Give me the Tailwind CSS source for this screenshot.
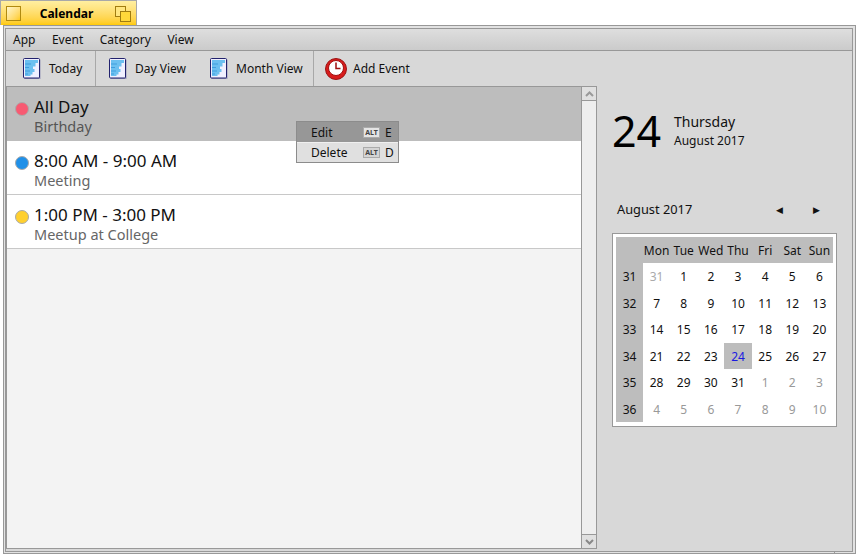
<!DOCTYPE html>
<html><head><meta charset="utf-8"><script src="https://cdn.jsdelivr.net/npm/@tailwindcss/browser@4"></script></head>
<body class="w-[857px] h-[555px] overflow-hidden bg-white font-['Noto_Sans',sans-serif] text-[12px] text-[#111] relative">
<!-- tab -->
<div class="w-[137px] h-[25px] border-t border-r border-l border-[#a8a8a8] bg-gradient-to-b from-[#ffefa0] to-[#ffcb00] flex items-center pl-[5px] pr-[5px] justify-between">
  <div class="w-[15px] h-[15px] border border-[#b08a10] bg-gradient-to-br from-[#fff6c8] to-[#ffcb00] mt-[1px]"></div>
  <span class="font-bold text-[12px] text-black leading-none -ml-[3px] mt-[2px]">Calendar</span>
  <svg width="16" height="16" viewBox="0 0 16 16" class="mt-[1px]"><rect x=".5" y=".5" width="10" height="10" fill="#ffe680" stroke="#a07c10"/><rect x="5.500" y="5.500" width="10" height="10" fill="#ffd83a" stroke="#a07c10"/></svg>
</div>
<!-- window -->
<div class="w-[853px] h-[529px] ml-[3px] border border-[#989898] bg-[#e2e2e2] pt-[2px] pl-[1px] pr-[2px] relative">
  <div class="h-[524px] border border-[#989898] bg-[#d8d8d8] flex flex-col">
    <!-- menu -->
    <div class="h-[22px] flex items-center gap-[16.500px] pl-[7px] bg-gradient-to-b from-[#dedede] to-[#cbcbcb] border-b border-[#989898] text-[12px] shrink-0">
      <span>App</span><span>Event</span><span>Category</span><span>View</span>
    </div>
    <!-- toolbar -->
    <div class="h-[35px] flex items-stretch shrink-0 bg-[#d8d8d8] text-[12px]">
      <div class="w-[90px] border-r border-[#a8a8a8] flex items-center pl-[17px] gap-[8px]">
        <svg width="18" height="21" viewBox="0 0 18 21"><rect x="1.500" y="1.500" width="16" height="19.500" fill="#9a9ab8"/><rect x=".5" y=".5" width="16" height="19.500" rx="1" fill="#f0f0ff" stroke="#22226e"/><path d="M2 2H15V5H12.500V8.500H10V11H11.500V14H9.500V16.500H7.500V18H2Z" fill="#6cc0f0"/><path d="M2 6H8M2 9.500H6M2 13H7M2 16H5" stroke="#3f9ede" fill="none" stroke-width="1"/></svg>
        <span class="mt-[1px]">Today</span>
      </div>
      <div class="w-[218px] border-r border-[#a8a8a8] flex items-center pl-[13px]">
        <svg width="18" height="21" viewBox="0 0 18 21"><rect x="1.500" y="1.500" width="16" height="19.500" fill="#9a9ab8"/><rect x=".5" y=".5" width="16" height="19.500" rx="1" fill="#f0f0ff" stroke="#22226e"/><path d="M2 2H15V5H12.500V8.500H10V11H11.500V14H9.500V16.500H7.500V18H2Z" fill="#6cc0f0"/><path d="M2 6H8M2 9.500H6M2 13H7M2 16H5" stroke="#3f9ede" fill="none" stroke-width="1"/></svg>
        <span class="ml-[8px] mt-[1px]">Day View</span>
        <svg class="ml-[24px]" width="18" height="21" viewBox="0 0 18 21"><rect x="1.500" y="1.500" width="16" height="19.500" fill="#9a9ab8"/><rect x=".5" y=".5" width="16" height="19.500" rx="1" fill="#f0f0ff" stroke="#22226e"/><path d="M2 2H15V5H12.500V8.500H10V11H11.500V14H9.500V16.500H7.500V18H2Z" fill="#6cc0f0"/><path d="M2 6H8M2 9.500H6M2 13H7M2 16H5" stroke="#3f9ede" fill="none" stroke-width="1"/></svg>
        <span class="ml-[8px] mt-[1px]">Month View</span>
      </div>
      <div class="flex items-center pl-[11px] gap-[6px]">
        <svg width="22" height="22" viewBox="0 0 22 22"><circle cx="11" cy="11" r="10.500" fill="#d81c1c" stroke="#9a1414"/><circle cx="11" cy="10" r="7.500" fill="#fff" stroke="#a01010"/><path d="M11 4.500V10.500H15.500" fill="none" stroke="#a01010" stroke-width="1.500"/></svg>
        <span class="mt-[1px]">Add Event</span>
      </div>
    </div>
    <!-- body -->
    <div class="flex-1 flex min-h-0">
      <div class="mb-[2px] w-[591px] flex border border-[#989898] shrink-0">
        <div class="w-[574px] bg-[#f3f3f3] flex flex-col">
          <div class="h-[54px] bg-[#bdbdbd] flex items-start pl-[8px] pt-[10px] gap-[5px]">
            <span class="w-[14px] h-[14px] rounded-full bg-[#f85a72] border border-[#aaa] mt-[5px]"></span>
            <div><div class="text-[17px] leading-[20px] h-[19px]">All Day</div><div class="text-[14.500px] leading-[20px] h-[20px] text-[#555]">Birthday</div></div>
          </div>
          <div class="h-[54px] bg-white border-b border-[#c8c8c8] flex items-start pl-[8px] pt-[10px] gap-[5px]">
            <span class="w-[14px] h-[14px] rounded-full bg-[#2090e8] border border-[#aaa] mt-[5px]"></span>
            <div><div class="text-[17px] leading-[19px]">8:00 AM - 9:00 AM</div><div class="text-[14.500px] leading-[20px] text-[#666]">Meeting</div></div>
          </div>
          <div class="h-[54px] bg-white border-b border-[#c8c8c8] flex items-start pl-[8px] pt-[10px] gap-[5px]">
            <span class="w-[14px] h-[14px] rounded-full bg-[#ffd030] border border-[#aaa] mt-[5px]"></span>
            <div><div class="text-[17px] leading-[19px]">1:00 PM - 3:00 PM</div><div class="text-[14.500px] leading-[20px] text-[#666]">Meetup at College</div></div>
          </div>
        </div>
        <div class="w-[15px] border-l border-[#989898] bg-[#eeeeee] flex flex-col">
          <div class="h-[14px] border-b border-[#989898] bg-[#e0e0e0] flex items-center justify-center"><svg width="9" height="6" viewBox="0 0 9 6"><path d="M1 5L4.500 1.500L8 5" fill="none" stroke="#999" stroke-width="2"/></svg></div>
          <div class="flex-1"></div>
          <div class="h-[14px] border-t border-[#989898] bg-[#e0e0e0] flex items-center justify-center"><svg width="9" height="6" viewBox="0 0 9 6"><path d="M1 1L4.500 4.500L8 1" fill="none" stroke="#888" stroke-width="2"/></svg></div>
        </div>
      </div>
      <!-- right -->
      <div class="flex-1 pl-[15px] pt-[19px]">
        <div class="flex items-center h-[50px]">
          <div class="text-[43px] leading-none text-black w-[62px]">24</div>
          <div><div class="text-[14px] leading-[19px]">Thursday</div><div class="text-[12px] leading-[17px] mt-[1px] -mb-[1px]">August 2017</div></div>
        </div>
        <div class="mt-[43px] h-[24px] flex items-center pl-[5px] text-[12.800px]">
          <span>August 2017</span>
          <span class="ml-[84px] text-[9px] w-[37px]">◀</span><span class="text-[9px]">▶</span>
        </div>
        <div class="mt-[11px] w-[225px] h-[194px] border border-[#989898] bg-white p-[3px] text-[12px]">
          <div class="grid grid-cols-[27px_repeat(7,27.143px)] grid-rows-[26px_repeat(6,26.500px)] text-center items-center [&>span]:pt-[2px]">
            <div class="bg-[#bdbdbd] self-stretch"></div>
            <div class="col-span-7 grid grid-cols-7 bg-[#bdbdbd] self-stretch items-center pt-[1px]"><span>Mon</span><span>Tue</span><span>Wed</span><span>Thu</span><span>Fri</span><span>Sat</span><span>Sun</span></div>
            <div class="bg-[#bdbdbd] self-stretch flex items-center justify-center pt-[2px]">31</div><span class="text-[#aaa]">31</span><span>1</span><span>2</span><span>3</span><span>4</span><span>5</span><span>6</span>
            <div class="bg-[#bdbdbd] self-stretch flex items-center justify-center pt-[2px]">32</div><span>7</span><span>8</span><span>9</span><span>10</span><span>11</span><span>12</span><span>13</span>
            <div class="bg-[#bdbdbd] self-stretch flex items-center justify-center pt-[2px]">33</div><span>14</span><span>15</span><span>16</span><span>17</span><span>18</span><span>19</span><span>20</span>
            <div class="bg-[#bdbdbd] self-stretch flex items-center justify-center pt-[2px]">34</div><span>21</span><span>22</span><span>23</span><span class="bg-[#bdbdbd] text-[#1a1ae0] self-stretch flex items-center justify-center">24</span><span>25</span><span>26</span><span>27</span>
            <div class="bg-[#bdbdbd] self-stretch flex items-center justify-center pt-[2px]">35</div><span>28</span><span>29</span><span>30</span><span>31</span><span class="text-[#999]">1</span><span class="text-[#999]">2</span><span class="text-[#999]">3</span>
            <div class="bg-[#bdbdbd] self-stretch flex items-center justify-center pt-[2px]">36</div><span class="text-[#999]">4</span><span class="text-[#999]">5</span><span class="text-[#999]">6</span><span class="text-[#999]">7</span><span class="text-[#999]">8</span><span class="text-[#999]">9</span><span class="text-[#999]">10</span>
          </div>
        </div>
      </div>
    </div>
  </div>
  <span class="absolute left-[830px] bottom-0 w-px h-[2px] bg-[#989898]"></span>
</div>
<!-- popup menu -->
<div class="absolute left-[296px] top-[121px] w-[103px] h-[42px] border border-[#8c8c8c] bg-[#e0e0e0] text-[12px] flex flex-col">
  <div class="h-[20px] bg-[#979797] flex items-center pl-[14px] pr-[1px] pt-[1px]"><span class="flex-1">Edit</span><span class="w-[17px] h-[11px] border border-[#aaa] bg-[#e4e4e4] text-[7px] leading-[9px] font-bold text-center text-[#444] mr-[5px]">ALT</span><span class="w-[12px]">E</span></div>
  <div class="flex-1 flex items-center pl-[14px] pr-[1px] border-t border-[#f0f0f0]"><span class="flex-1">Delete</span><span class="w-[17px] h-[11px] border border-[#aaa] bg-[#d4d4d4] text-[7px] leading-[9px] font-bold text-center text-[#444] mr-[5px]">ALT</span><span class="w-[12px]">D</span></div>
</div>
</body></html>
